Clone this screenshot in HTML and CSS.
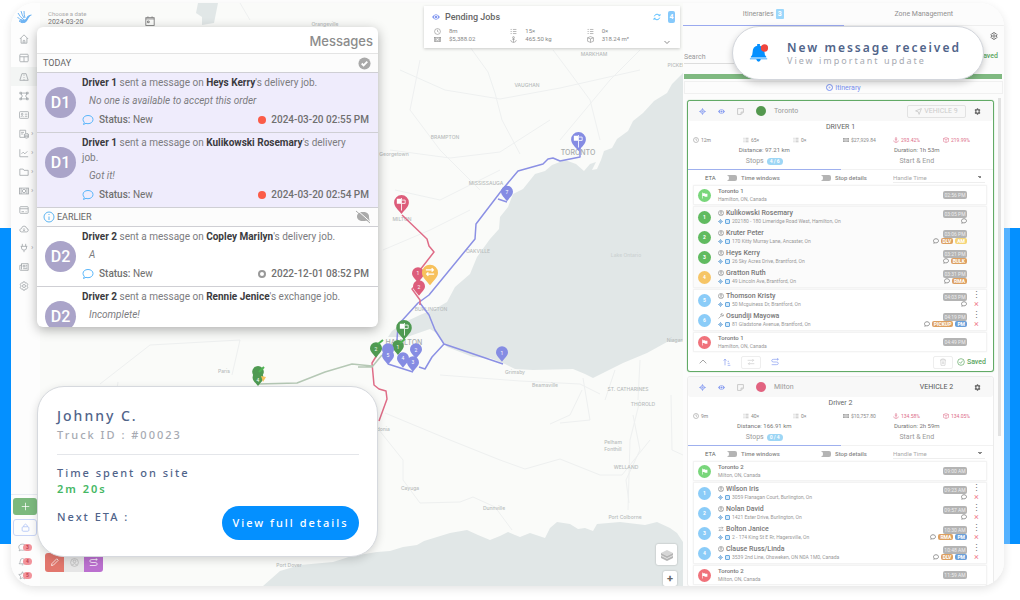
FILE: index.html
```html
<!DOCTYPE html>
<html lang="en">
<head>
<meta charset="utf-8">
<title>Route planner</title>
<link rel="stylesheet" href="styles.css">
</head>
<body>
<svg class="sprite" aria-hidden="true">
  <symbol id="home" viewBox="0 0 12 12"><path d="M1 6 6 1l5 5M2.500 5v6h7V5M5 11V8q1-1.500 2 0v3"/></symbol>
  <symbol id="table" viewBox="0 0 12 12"><rect x="1" y="1.500" width="10" height="9" rx="1"/><path d="M1 4.500h10M6 4.500v6"/></symbol>
  <symbol id="road" viewBox="0 0 12 12"><path d="M3.500 2h5L11 10H1zM6 3v1.500M6 6v1M6 8.500V10"/></symbol>
  <symbol id="zone" viewBox="0 0 12 12"><path d="M2 2.500h8L8 6l2 3.500H2L4 6zM1 1.500h2v2H1zM9 1.500h2v2H9zM1 8.500h2v2H1zM9 8.500h2v2H9z"/></symbol>
  <symbol id="idcard" viewBox="0 0 12 12"><rect x=".5" y="2" width="11" height="8" rx="1"/><circle cx="3.800" cy="5" r="1"/><path d="M2 8q2-2 3.500 0M7 5h3M7 7.500h3"/></symbol>
  <symbol id="orders" viewBox="0 0 12 12"><path d="M7 10H1V1.500h7V5M2.500 4H6M2.500 6H5"/><ellipse cx="9" cy="6.500" rx="2.500" ry="1"/><path d="M6.500 6.500V10q2.500 2 5 0V6.500M6.500 8.500q2.500 1.500 5 0"/></symbol>
  <symbol id="chart" viewBox="0 0 12 12"><path d="M1 1.500v9h10M3 7l2-2 2 2 3-3"/></symbol>
  <symbol id="folder" viewBox="0 0 12 12"><path d="M1 2.500h4l1 1.500h5v6H1z"/></symbol>
  <symbol id="cash" viewBox="0 0 12 12"><rect x=".5" y="2.500" width="11" height="7"/><circle cx="6" cy="6" r="2"/><path d="M2.500 2.500v7M9.500 2.500v7"/></symbol>
  <symbol id="card" viewBox="0 0 12 12"><rect x="1" y="2" width="10" height="8" rx="1"/><path d="M1 4.500h10M3 8h3M8 8h1"/></symbol>
  <symbol id="cloud" viewBox="0 0 12 12"><path d="M3 9.500q-2.500-.5-2-2.500Q1.500 5.500 3 5.500 3.500 2.500 6 2.500t3 2.500q2.500.5 2 3-.5 1.500-2 1.500zM6 5v3M4.800 7 6 8.200 7.200 7"/></symbol>
  <symbol id="plug" viewBox="0 0 12 12"><path d="M4 1v3M8 1v3M2 4h8M3 4v2q0 2.500 3 2.500T9 6V4M6 8.500V11"/></symbol>
  <symbol id="news" viewBox="0 0 12 12"><path d="M3 2h8v8H2q-1 0-1-1V4h2zM3 2v7M5 4h2v2H5zM8 4h2M8 6h2M5 8h5"/></symbol>
  <symbol id="gear" viewBox="0 0 12 12"><path d="M5 1h2l.5 1.500 1.500-.3L10.500 4l-1 2 1 2L9 9.800l-1.500-.3L7 11H5l-.5-1.500-1.500.3L1.500 8l1-2-1-2L3 2.200l1.500.3z"/><circle cx="6" cy="6" r="1.800"/></symbol>
  <symbol id="cogwheel" viewBox="0 0 12 12"><path fill="currentColor" stroke="none" fill-rule="evenodd" d="M5 .5h2l.5 1.700 1.700-.4L11 3.500 9.800 5v2L11 8.500l-1.800 1.700-1.700-.4L7 11.500H5l-.5-1.700-1.700.4L1 8.500 2.200 7V5L1 3.500l1.800-1.700 1.700.4zM6 4a2 2 0 1 0 0 4 2 2 0 0 0 0-4z"/></symbol>
  <symbol id="plus" viewBox="0 0 12 12"><path d="M6 1v10M1 6h10"/></symbol>
  <symbol id="lock" viewBox="0 0 12 12"><rect x="1.500" y="5" width="9" height="6" rx="1.500"/><path d="M3.500 5V3.500q2.500-4 5 0V5"/></symbol>
  <symbol id="bubble" viewBox="0 0 12 12"><path d="M6 1.500c3 0 5 1.700 5 4s-2 4.200-5 4.200q-1 0-2-.4L1.500 10.500l.8-2.200Q1 7 1 5.500c0-2.300 2-4 5-4z"/></symbol>
  <symbol id="bell" viewBox="0 0 12 12"><path d="M1.500 9Q3 7.500 3 5.500 3 2 6 2t3 3.500Q9 7.500 10.500 9zM5 10.500h2"/></symbol>
  <symbol id="star" viewBox="0 0 12 12"><path d="m6 1 1.500 3.200 3.500.5-2.500 2.400.6 3.400L6 9l-3.100 1.500.6-3.400L1 4.700l3.500-.5z"/></symbol>
  <symbol id="clock" viewBox="0 0 12 12"><circle cx="6" cy="6" r="5"/><path d="M6 3v3l2 1"/></symbol>
  <symbol id="list" viewBox="0 0 12 12"><path d="M1 2.500h2M5 2.500h6M1 6h2M5 6h6M1 9.500h2M5 9.500h6"/></symbol>
  <symbol id="weight" viewBox="0 0 12 12"><circle cx="6" cy="2.500" r="1.500"/><path d="M6 4v7M3.500 5.500h5M1 7q1 4 5 4t5-4"/></symbol>
  <symbol id="box" viewBox="0 0 12 12"><path d="m6 1 5 2v6l-5 2-5-2V3zM1 3l5 2 5-2M6 5v6"/></symbol>
  <symbol id="eye" viewBox="0 0 12 12"><path fill="currentColor" stroke="none" fill-rule="evenodd" d="M0 6Q6-2 12 6 6 14 0 6zM6 3a3 3 0 1 0 0 6 3 3 0 0 0 0-6z"/><circle fill="currentColor" stroke="none" cx="6" cy="6" r="1.800"/></symbol>
  <symbol id="target" viewBox="0 0 12 12"><circle cx="6" cy="6" r="3.200"/><circle cx="6" cy="6" r="1"/><path d="M6 .5v2.300M6 9.200v2.300M.5 6h2.300M9.200 6h2.300"/></symbol>
  <symbol id="note" viewBox="0 0 12 12"><path d="M1 1h10v6l-4 4H1zM11 7H7v4"/></symbol>
  <symbol id="person" viewBox="0 0 12 12"><circle cx="6" cy="6" r="5.200"/><circle cx="6" cy="4.500" r="1.800"/><path d="M2.500 9.500Q6 5.500 9.500 9.500"/></symbol>
  <symbol id="wrench" viewBox="0 0 12 12"><path d="m1 11 5.500-5.500M8.500 1Q5 1 5.500 4.500 7 8 11 5.500L11 3.500 9 5 7.500 3.500z"/></symbol>
  <symbol id="swap" viewBox="0 0 12 12"><path d="M1 3.500h9M8 1.500l2 2-2 2M11 8.500H2M4 6.500l-2 2 2 2"/></symbol>
  <symbol id="refresh" viewBox="0 0 12 12"><path d="M2 5Q3 1.800 6 1.800q2.500 0 4 2.200M10.500 1.500V4H8M10 7Q9 10.200 6 10.200 3.500 10.200 2 8M1.500 10.500V8H4"/></symbol>
  <symbol id="down" viewBox="0 0 12 12"><path d="m1 4 5 5 5-5"/></symbol>
  <symbol id="up" viewBox="0 0 12 12"><path d="m1 8 5-5 5 5"/></symbol>
  <symbol id="sort" viewBox="0 0 12 12"><path d="M3 11V2M1 4l2-2.500L5 4M7 5h2M7 8h3M7 11h4"/></symbol>
  <symbol id="route" viewBox="0 0 12 12"><path d="M11 2H4Q1 2 1 4t3 2h4q3 0 3 2t-3 2H1M9 .5 11 2 9 3.500"/></symbol>
  <symbol id="trash" viewBox="0 0 12 12"><path d="M1.500 3h9M4 3V1.500h4V3M2.500 3l.5 8h6l.5-8M5 5v4M7 5v4"/></symbol>
  <symbol id="check" viewBox="0 0 12 12"><circle cx="6" cy="6" r="5"/><path d="m3.500 6 2 2 3-4"/></symbol>
  <symbol id="send" viewBox="0 0 12 12"><path d="M11 1 7 11 5.500 6.500 1 5z"/></symbol>
  <symbol id="flag" viewBox="0 0 12 12"><path fill="currentColor" d="M2 1h1v10H2zM3 2h4v1h4v5H6V7H3z"/></symbol>
  <symbol id="depotflag" viewBox="0 0 12 12"><path fill="currentColor" d="M1 1h5v6H1zM6 0h1v15H6z"/><path stroke="currentColor" d="M7 2.500h4v4H7"/></symbol>
  <symbol id="pencil" viewBox="0 0 12 12"><path d="m2 10 .5-2.500L9 1l2 2-6.500 6.500z"/></symbol>
  <symbol id="pin" viewBox="0 0 14 18"><path d="M7 0a7 7 0 0 1 7 7c0 4-4 7-7 11C4 14 0 11 0 7a7 7 0 0 1 7-7z"/></symbol>
</svg>

<div class="stage">
  <main class="app">
    <nav class="rail" aria-label="Main">
      <svg class="logo" viewBox="0 0 15 15"><path d="M1 3q2 4 5 6M4 1q1 4 3 7M7 1q0 4 1 7M.5 7q2 3 5 3M14.500 5q-3 0-4 2.500T8 12q-3 2-6-1 4 0 5-2"/><path class="body" d="M14 5q-4 0-5 4-3 1-6 2 4 4 7 0 2-4 4-6z"/></svg>
      <a href="#" aria-label="Home"><svg><use href="#home"/></svg></a>
      <a href="#" aria-label="Boards"><svg><use href="#table"/></svg></a>
      <a href="#" aria-label="Routes" class="here"><svg><use href="#road"/></svg></a>
      <a href="#" aria-label="Zones"><svg><use href="#zone"/></svg></a>
      <a href="#" aria-label="Contacts"><svg><use href="#idcard"/></svg></a>
      <a href="#" aria-label="Orders" class="more"><svg><use href="#orders"/></svg></a>
      <a href="#" aria-label="Reports" class="more"><svg><use href="#chart"/></svg></a>
      <a href="#" aria-label="Files" class="more"><svg><use href="#folder"/></svg></a>
      <a href="#" aria-label="Payments" class="more"><svg><use href="#cash"/></svg></a>
      <a href="#" aria-label="Billing"><svg><use href="#card"/></svg></a>
      <a href="#" aria-label="Import"><svg><use href="#cloud"/></svg></a>
      <a href="#" aria-label="Integrations" class="more"><svg><use href="#plug"/></svg></a>
      <a href="#" aria-label="News"><svg><use href="#news"/></svg></a>
      <a href="#" aria-label="Settings"><svg><use href="#gear"/></svg></a>
      <div class="rail-foot">
        <button class="add" aria-label="Add"><svg><use href="#plus"/></svg></button>
        <button class="lock" aria-label="Lock"><svg><use href="#lock"/></svg></button>
        <a href="#" aria-label="Messages" class="alert"><svg><use href="#bubble"/></svg><b>3</b></a>
        <a href="#" aria-label="Alerts" class="alert"><svg><use href="#bell"/></svg><b>4</b></a>
        <a href="#" aria-label="Favourites" class="alert"><svg><use href="#star"/></svg><b>5</b></a>
      </div>
    </nav>

    <section class="map" aria-label="Map">
      <svg class="canvas" viewBox="40 3 643 583" preserveAspectRatio="xMidYMid slice">
        <g class="water">
          <path d="M683 73 672 84 667 93 654 101 643 113 633 121 628 131 617 139 612 148 604 151 601 160 597 169 592 170 596 162 590 164 584 171 576 164 565 160 552 165 545 171 535 174 523 189 513 194 508 207 500 217 499 229 490 239 477 257 470 274 455 287 447 302 435 309 420 315 403 323 392 331 388 337 407 337 430 329 438 334 447 347 473 357 490 358 503 363 515 369 533 370 573 369 585 374 593 378 605 372 623 363 647 353 667 342 683 341z"/>
          <path d="M263 586 280 571 300 565 333 562 352 556 377 552 390 551 403 547 417 545 424 541 437 537 450 533 467 530 478 535 490 540 500 536 508 532 515 535 520 537 530 533 545 538 550 528 557 522 570 524 578 529 585 528 593 531 597 524 620 522 645 525 657 522 670 528 677 533 683 542V586z"/>
          <path d="M198 3l-2 10 6 4 0 8 12-2 4-20z"/>
        </g>
        <g class="roads">
          <path d="M470 47 488 72 495 93 502 120 520 154M553 50 571 74 590 100 600 140M400 70 445 90 500 99 560 88 640 70M390 150 450 158 500 152 550 120M420 60 410 110 440 150 480 190M395 190 440 200 500 170M640 50 610 80 560 140M383 250 430 230 470 210M250 20 240 3M100 384 150 345 240 340 232 375M105 470 118 382M379 430 403 460 403 480 420 503 460 502 473 497 495 507 512 530M385 413 450 440 500 460 525 469 560 459 600 475 622 475 650 440M640 400 630 440 628 510M633 415 640 450 626 480 629 503M671 395 672 450 683 455M440 375 520 381 580 384 600 394M583 378 590 420 560 423M582 390 570 415 550 424M640 360 638 400M615 370 605 400"/>
        </g>
        <g class="places">
          <text x="527" y="87">VAUGHAN</text><text x="594" y="56">MARKHAM</text><text x="681" y="67">PICKERING</text>
          <text x="445" y="139">BRAMPTON</text><text x="486" y="185">MISSISSAUGA</text><text x="478" y="253">OAKVILLE</text>
          <text x="402" y="221">MILTON</text><text x="431" y="311">BURLINGTON</text><text class="city" x="404" y="345">HAMILTON</text>
          <text class="city" x="578" y="155">TORONTO</text><text x="628" y="391">ST. CATHARINES</text><text x="643" y="406">THOROLD</text>
          <text x="626" y="469">WELLAND</text><text x="613" y="444">Pelham</text><text x="613" y="451">Fonthill</text>
          <text x="625" y="519">Port Colborne</text><text x="494" y="510">Dunnville</text><text x="410" y="490">Cayuga</text>
          <text x="545" y="387">Beamsville</text><text x="515" y="374">Grimsby</text><text x="676" y="342">Niagara</text>
          <text class="faint" x="626" y="257">Lake Ontario</text><text x="394" y="156">Georgetown</text><text x="224" y="373">Paris</text>
          <text x="378" y="431">Caledonia</text><text x="289" y="567">Port Dover</text><text x="325" y="26">Orangeville</text>
        </g>
        <g class="route purple-line"><path d="M580 148V157L570 159 560 161 553 158 548 159 543 164 518 171 502 190 476 224 475 239 429 295 418 303 398 325 397 340M498 199 507 202M420 303 429 315 435 330 444 344 503 364M444 344 432 357 425 369 419 367M388 364 413 372"/></g>
        <g class="route red-line"><path d="M402 215 427 239 429 246 434 252 420 270 419 282 412 289 420 300V305M377 355 372 363 374 385 379 389 386 391 387 399 379 421"/></g>
        <g class="route green-line"><path d="M258 384 297 383 325 372 352 364 372 366M358 367 372 367 382 355"/></g>
        <g class="pins">
          <use href="#pin" class="green" x="252" y="366" width="12" height="15"/><use href="#pin" class="green" x="252" y="372" width="12" height="14"/>
          <path class="gold" d="m261 376 5 1-3 5z"/><path class="tick" d="m259 372 5-5"/><text x="258" y="382">4</text>
          <use href="#pin" class="purple" x="571" y="132" width="15" height="19"/><use href="#depotflag" x="573" y="135" width="10" height="10"/>
          <use href="#pin" class="red" x="394" y="195" width="15" height="19"/><use href="#depotflag" x="396" y="198" width="10" height="10"/>
          <use href="#pin" class="purple" x="501" y="185" width="12" height="17"/><text x="507" y="194">7</text>
          <use href="#pin" class="red" x="412" y="267" width="12" height="16"/><text x="418" y="275">1</text>
          <use href="#pin" class="gold" x="422" y="264" width="16" height="22"/><use href="#swap" class="white" x="425" y="267" width="10" height="10"/>
          <use href="#pin" class="red" x="413" y="280" width="12" height="16"/><text x="419" y="289">2</text>
          <use href="#pin" class="green" x="396" y="320" width="16" height="20"/><use href="#depotflag" x="399" y="323" width="10" height="10"/>
          <use href="#pin" class="green" x="370" y="342" width="12" height="16"/><text x="376" y="351">2</text><path class="tick" d="m378 344 5-4"/>
          <use href="#pin" class="green" x="392" y="340" width="12" height="15"/><text x="398" y="349">1</text><path class="tick" d="m400 343 5-4"/>
          <use href="#pin" class="purple" x="382" y="343" width="12" height="16"/><use href="#pin" class="purple" x="382" y="349" width="12" height="16"/><text x="388" y="357">5</text>
          <use href="#pin" class="purple" x="410" y="343" width="12" height="16"/><text x="416" y="352">2</text>
          <use href="#pin" class="purple" x="397" y="352" width="12" height="16"/><text x="403" y="360">4</text>
          <use href="#pin" class="purple" x="407" y="356" width="12" height="16"/><text x="413" y="364">3</text>
          <use href="#pin" class="purple" x="496" y="346" width="12" height="16"/><text x="502" y="355">1</text>
        </g>
      </svg>
      <label class="date"><span>Choose a date</span><input type="text" value="2024-03-20"><svg viewBox="0 0 12 12"><rect x="1" y="2" width="10" height="9.500"/><path d="M1 3.500h10M3.500.5V2M8.500.5V2M3 6h2v2H3z"/></svg></label>
      <section class="pending">
        <header><svg class="ico blue"><use href="#eye"/></svg><h2>Pending Jobs</h2><button aria-label="Refresh"><svg class="ico sky"><use href="#refresh"/></svg></button><b>4</b></header>
        <div class="pending-grid">
          <span><svg class="ico"><use href="#clock"/></svg>8m</span><span><svg class="ico"><use href="#list"/></svg>15×</span><span><svg class="ico"><use href="#list"/></svg>0×</span>
          <span><svg class="ico"><use href="#cash"/></svg>$5,388.02</span><span><svg class="ico"><use href="#weight"/></svg>465.50 kg</span><span><svg class="ico"><use href="#box"/></svg>318.24 m²</span>
        </div>
        <button class="expand" aria-label="Expand"><svg class="ico"><use href="#down"/></svg></button>
      </section>
      <div class="tools"><button class="t-red" aria-label="Draw"><svg><use href="#pencil"/></svg></button><button class="t-grey" aria-label="Clear"><svg><use href="#person"/></svg></button><button class="t-violet" aria-label="Route"><svg><use href="#route"/></svg></button></div>
      <div class="zoomers"><button class="layers" aria-label="Layers"><svg viewBox="0 0 16 16"><path d="m8 3 6 3-6 3-6-3z"/><path class="dark" d="m2 6 6 3 6-3v5l-6 3-6-3z"/><path class="edge" d="m2 8.500 6 3 6-3"/></svg></button><button class="zin" aria-label="Zoom in">+</button></div>
    </section>

    <aside class="panel">
      <div class="tabs"><button class="on">Itineraries <b>3</b></button><button>Zone Management</button></div>
      <div class="find"><button aria-label="Panel settings"><svg class="ico"><use href="#gear"/></svg></button>
        <div><input type="search" placeholder="Search" aria-label="Search"><span class="saved"><svg class="ico"><use href="#check"/></svg>Saved</span></div></div>
      <div class="bar"></div>
      <button class="new"><svg class="ico"><use href="#plus"/></svg>Itinerary</button>
      <div class="scroll">
        <div class="cards">
          <article class="card active">
            <header><svg class="ico blue"><use href="#target"/></svg><svg class="ico blue"><use href="#eye"/></svg><svg class="ico pale"><use href="#note"/></svg><i class="dot dk-green"></i><h3>Toronto</h3><button class="vehicle off"><svg class="ico"><use href="#send"/></svg>VEHICLE 9</button><button class="cog" aria-label="Settings"><svg class="ico"><use href="#cogwheel"/></svg></button></header>
            <p class="driver">DRIVER 1</p>
            <div class="stats"><span><svg class="ico"><use href="#clock"/></svg>12m</span><span><svg class="ico"><use href="#list"/></svg>65×</span><span><svg class="ico"><use href="#list"/></svg>0×</span><span><svg class="ico"><use href="#cash"/></svg>$27,929.84</span><span class="over"><svg class="ico"><use href="#weight"/></svg>293.42%</span><span class="over"><svg class="ico"><use href="#box"/></svg>219.99%</span></div>
            <div class="totals"><span>Distance: 97.21 km</span><span>Duration: 1h 53m</span></div>
            <div class="subtabs"><button class="on">Stops <b>4 / 6</b></button><button>Start &amp; End</button></div>
            <div class="opts"><span>ETA</span><label><input type="checkbox">Time windows</label><label><input type="checkbox">Stop details</label><select aria-label="Handle time"><option>Handle Time</option></select></div>
            <ul class="group"><li class="depot"><i class="num lime"><svg><use href="#flag"/></svg></i><div><h4>Toronto 1</h4><p>Hamilton, ON, Canada</p></div><div class="meta"><time>02:56 PM</time></div></li></ul>
            <ul class="group done">
              <li><i class="num green">1</i><div><h4><svg class="ico"><use href="#person"/></svg>Kulikowski Rosemary</h4><p><svg class="ico"><use href="#target"/></svg><i class="sq"></i>202180 - 180 Limeridge Road West, Hamilton, On</p></div><div class="meta"><time>03:05 PM</time><span><svg class="ico"><use href="#bubble"/></svg></span></div></li>
              <li><i class="num green">2</i><div><h4><svg class="ico"><use href="#person"/></svg>Kruter Peter</h4><p><svg class="ico"><use href="#target"/></svg><i class="sq"></i>170 Kitty Murray Lane, Ancaster, On</p></div><div class="meta"><time>03:06 PM</time><span><svg class="ico"><use href="#bubble"/></svg><b class="or">DLV</b><b class="ye">AM</b></span></div></li>
              <li><i class="num green">3</i><div><h4><svg class="ico"><use href="#person"/></svg>Heys Kerry</h4><p><svg class="ico"><use href="#target"/></svg><i class="sq"></i>26 Sky Acres Drive, Brantford, On</p></div><div class="meta"><time>03:21 PM</time><span><svg class="ico"><use href="#bubble"/></svg><b class="or">BULK</b></span></div></li>
              <li><i class="num gold">4</i><div><h4><svg class="ico"><use href="#person"/></svg>Gratton Ruth</h4><p><svg class="ico"><use href="#target"/></svg><i class="sq"></i>49 Lincoln Ave, Brantford, On</p></div><div class="meta"><time>03:31 PM</time><span><svg class="ico"><use href="#bubble"/></svg><b class="or">RMA</b></span></div></li>
            </ul>
            <ul class="group">
              <li><i class="num sky">5</i><div><h4><svg class="ico"><use href="#person"/></svg>Thomson Kristy</h4><p><svg class="ico"><use href="#target"/></svg><i class="sq"></i>50 Mcguiness Dr, Brantford, On</p></div><div class="meta"><time>04:03 PM</time><span><svg class="ico"><use href="#bubble"/></svg></span></div><div class="acts"><button aria-label="More">⋮</button><button aria-label="Remove">×</button></div></li>
              <li><i class="num sky">6</i><div><h4><svg class="ico"><use href="#wrench"/></svg>Osundiji Mayowa</h4><p><svg class="ico"><use href="#target"/></svg><i class="sq"></i>81 Gladstone Avenue, Brantford, On</p></div><div class="meta"><time>04:19 PM</time><span><svg class="ico"><use href="#bubble"/></svg><b class="or">PICKUP</b><b class="bl">PM</b></span></div><div class="acts"><button aria-label="More">⋮</button><button aria-label="Remove">×</button></div></li>
            </ul>
            <ul class="group"><li class="depot"><i class="num coral"><svg><use href="#flag"/></svg></i><div><h4>Toronto 1</h4><p>Hamilton, ON, Canada</p></div><div class="meta"><time>04:49 PM</time></div></li></ul>
            <footer><button aria-label="Collapse"><svg class="ico"><use href="#up"/></svg></button><button class="blue" aria-label="Sort"><svg class="ico"><use href="#sort"/></svg></button><button class="framed" aria-label="Reverse"><svg class="ico"><use href="#swap"/></svg></button><button class="blue" aria-label="Optimise"><svg class="ico"><use href="#route"/></svg></button><button class="framed last" aria-label="Delete"><svg class="ico"><use href="#trash"/></svg></button><span class="saved"><svg class="ico"><use href="#check"/></svg>Saved</span></footer>
          </article>

          <article class="card">
            <header><svg class="ico blue"><use href="#target"/></svg><svg class="ico blue"><use href="#eye"/></svg><svg class="ico pale"><use href="#note"/></svg><i class="dot rose"></i><h3>Milton</h3><button class="vehicle">VEHICLE 2</button><button class="cog" aria-label="Settings"><svg class="ico"><use href="#cogwheel"/></svg></button></header>
            <p class="driver">Driver 2</p>
            <div class="stats"><span><svg class="ico"><use href="#clock"/></svg>9m</span><span><svg class="ico"><use href="#list"/></svg>40×</span><span><svg class="ico"><use href="#list"/></svg>0×</span><span><svg class="ico"><use href="#cash"/></svg>$10,757.80</span><span class="over"><svg class="ico"><use href="#weight"/></svg>134.58%</span><span class="over"><svg class="ico"><use href="#box"/></svg>134.05%</span></div>
            <div class="totals"><span>Distance: 166.91 km</span><span>Duration: 2h 59m</span></div>
            <div class="subtabs"><button class="on">Stops <b>0 / 4</b></button><button>Start &amp; End</button></div>
            <div class="opts"><span>ETA</span><label><input type="checkbox">Time windows</label><label><input type="checkbox">Stop details</label><select aria-label="Handle time"><option>Handle Time</option></select></div>
            <ul class="group"><li class="depot"><i class="num lime"><svg><use href="#flag"/></svg></i><div><h4>Toronto 2</h4><p>Milton, ON, Canada</p></div><div class="meta"><time>09:00 AM</time></div></li></ul>
            <ul class="group">
              <li><i class="num sky">1</i><div><h4><svg class="ico"><use href="#person"/></svg>Wilson Iris</h4><p><svg class="ico"><use href="#target"/></svg><i class="sq"></i>3059 Flanagan Court, Burlington, On</p></div><div class="meta"><time>09:23 AM</time><span><svg class="ico"><use href="#bubble"/></svg></span></div><div class="acts"><button aria-label="More">⋮</button><button aria-label="Remove">×</button></div></li>
              <li><i class="num sky">2</i><div><h4><svg class="ico"><use href="#person"/></svg>Nolan David</h4><p><svg class="ico"><use href="#target"/></svg><i class="sq"></i>1421 Ester Drive, Burlington, On</p></div><div class="meta"><time>09:57 AM</time><span><svg class="ico"><use href="#bubble"/></svg></span></div><div class="acts"><button aria-label="More">⋮</button><button aria-label="Remove">×</button></div></li>
              <li><i class="num sky">3</i><div><h4><svg class="ico"><use href="#swap"/></svg>Bolton Janice</h4><p><svg class="ico"><use href="#target"/></svg><i class="sq"></i>2 - 174 King St E Rr, Hagersville, On</p></div><div class="meta"><time>10:30 AM</time><span><svg class="ico"><use href="#bubble"/></svg><b class="or">RMA</b><b class="bl">PM</b></span></div><div class="acts"><button aria-label="More">⋮</button><button aria-label="Remove">×</button></div></li>
              <li><i class="num sky">4</i><div><h4><svg class="ico"><use href="#person"/></svg>Clause Russ/Linda</h4><p><svg class="ico"><use href="#target"/></svg><i class="sq"></i>3539 2nd Line, Ohsweken, ON N0A 1M0, Canada</p></div><div class="meta"><time>10:48 AM</time><span><svg class="ico"><use href="#bubble"/></svg><b class="or">DLV</b><b class="bl">PM</b></span></div><div class="acts"><button aria-label="More">⋮</button><button aria-label="Remove">×</button></div></li>
            </ul>
            <ul class="group"><li class="depot"><i class="num coral"><svg><use href="#flag"/></svg></i><div><h4>Toronto 2</h4><p>Milton, ON, Canada</p></div><div class="meta"><time>11:59 AM</time></div></li></ul>
          </article>
        </div>
        <div class="thumb"></div>
      </div>
    </aside>
  </main>

  <section class="messages">
    <h1>Messages</h1>
    <h2 class="sec"><span>TODAY</span><svg class="tickdot" viewBox="0 0 14 14"><circle cx="7" cy="7" r="6.500"/><path d="m4 7 2 2 4-4"/></svg></h2>
    <article class="msg unread"><i class="face">D1</i><div><p><b>Driver 1</b> sent a message on <b>Heys Kerry</b>'s delivery job.</p><q>No one is available to accept this order</q><footer><svg class="talk"><use href="#bubble"/></svg><span><em>Status:</em> New</span><i class="mark"></i><time>2024-03-20 02:55 PM</time></footer></div></article>
    <article class="msg unread"><i class="face">D1</i><div><p><b>Driver 1</b> sent a message on <b>Kulikowski Rosemary</b>'s delivery job.</p><q>Got it!</q><footer><svg class="talk"><use href="#bubble"/></svg><span><em>Status:</em> New</span><i class="mark"></i><time>2024-03-20 02:54 PM</time></footer></div></article>
    <h2 class="sec"><svg class="info" viewBox="0 0 12 12"><circle cx="6" cy="6" r="5"/><path d="M6 5.500V9M6 3v1"/></svg><span>EARLIER</span><svg class="mute" viewBox="0 0 16 14"><path class="fill" d="M8 2c4 0 6 2 6 4.500 0 2 .5 3.500 1 5-2 0-3-1-3.500-1q-1.500.5-3.500.5c-4 0-6-2-6-4.500S4 2 8 2z"/><path class="gap" d="m2 0 14 12.500"/><path class="slash" d="m1 1 14 12"/></svg></h2>
    <article class="msg"><i class="face">D2</i><div><p><b>Driver 2</b> sent a message on <b>Copley Marilyn</b>'s delivery job.</p><q>A</q><footer><svg class="talk"><use href="#bubble"/></svg><span><em>Status:</em> New</span><i class="mark read"></i><time>2022-12-01 08:52 PM</time></footer></div></article>
    <article class="msg"><i class="face">D2</i><div><p><b>Driver 2</b> sent a message on <b>Rennie Jenice</b>'s exchange job.</p><q>Incomplete!</q></div></article>
  </section>

  <section class="trip">
    <h2>Johnny C.</h2>
    <p class="truck">Truck ID : #00023</p>
    <p class="label">Time spent on site</p>
    <p class="value">2m 20s</p>
    <div class="trip-foot"><p>Next ETA :</p><button>View full details</button></div>
  </section>

  <section class="toast" role="status">
    <svg viewBox="0 0 22 22"><path d="M9 1h3v2q5 1 5 7 0 4 2 5v1H2v-1q2-1 2-5 0-6 5-7zM1 17h19v1H13q-.5 2.500-2.500 2.500T8 18H1z"/><circle cx="17" cy="5.500" r="4"/></svg>
    <div><h2>New message received</h2><p>View important update</p></div>
  </section>
</div>
</body>
</html>
```
FILE: styles.css
```css
*, ::before, ::after { box-sizing: border-box; }
* { margin: 0; padding: 0; }
body { background: #fff; font-family: Roboto, "Liberation Sans", sans-serif; color: #666; }
button, input, select { font: inherit; color: inherit; border: 0; background: none; }
button { display: inline-flex; align-items: center; justify-content: center; }
a { color: inherit; text-decoration: none; }
ul { list-style: none; }
i { font-style: normal; }
.sprite { position: absolute; width: 0; height: 0; }
symbol { overflow: visible; }
svg { fill: none; stroke: currentColor; }
.ico { width: 6px; height: 6px; flex: none; stroke-width: 1.5; }
.blue { color: #8298f0; }
.sky { color: #5fc0ff; }
.pale { color: #c4c4c4; }

/* Page frame with the blue side bands */
.stage { position: relative; display: flex; height: 100vh; padding: 3px 16px 14px 11px; overflow: hidden; }
.stage::before, .stage::after { content: ""; position: absolute; top: 228px; height: 316px; background: #0490ff; }
.stage::before { left: 0; width: 11px; }
.stage::after { right: 0; width: 16px; border-left: 6px solid #55b2ff; }
.app { flex: 1; display: grid; grid-template-columns: 29px 1fr 321px; border-radius: 24px; overflow: hidden; background: #fff; box-shadow: 0 3px 10px #0000001c; }

/* Icon rail */
.rail { display: flex; flex-direction: column; align-items: stretch; padding-top: 7px; color: #a4a8ac; background: #fdfdfd; }
.logo { width: 15px; height: 15px; margin: 0 auto 4px 6px; color: #6fb4f3; stroke-width: 1; }
.logo .body { fill: #6fb4f3; stroke: none; }
.rail > a { display: flex; align-items: center; justify-content: center; height: 19px; gap: 2px; padding-right: 3px; }
.rail > a svg { width: 10px; height: 10px; }
.rail .here { background: #f3f5f4; }
.rail .more::after { content: "›"; width: 3px; font-size: 8px; margin-right: -5px; }
.rail-foot { margin-top: auto; display: flex; flex-direction: column; gap: 4px; padding: 3px 3px 6px 2px; border-top: 1px solid #e8ecf2; }
.rail-foot button { height: 17px; border-radius: 3px; }
.rail-foot svg { width: 9px; height: 9px; }
.add { background: #7cb97e; color: #fff; }
.rail-foot .add { background: #7cb97e; }
.rail-foot .lock { border: 1px solid #c9d5f6; color: #a9bff5; margin-bottom: 2px; }
.alert { display: flex; align-items: center; justify-content: center; height: 10px; }
.alert b { width: 9px; height: 7px; margin-left: -4px; border-radius: 4px; background: #f2939b; color: #c24451; font-size: 5px; line-height: 7px; text-align: center; }

/* Map */
.map { position: relative; overflow: hidden; background: #fafbf9; }
.canvas { position: absolute; inset: 0; width: 100%; height: 100%; stroke: none; }
.water { fill: #e1e7e7; }
.roads { fill: none; stroke: #eef0f0; stroke-width: 1; }
.places text { font: 500 5px Inter, sans-serif; fill: #b8bcbc; text-anchor: middle; }
.places .city { font-size: 7px; fill: #a8acac; }
.places .faint { fill: #ccd2d2; }
.route { fill: none; stroke-width: 1.5; stroke-linejoin: round; }
.purple-line { stroke: #8b90e4; }
.red-line { stroke: #df6c87; }
.green-line { stroke: #b5c8b5; }
.pins .green { fill: #4f9a52; }
.pins .purple { fill: #858ce3; }
.pins .red { fill: #dd5d7b; }
.pins .gold { fill: #f7c15c; }
.pins { color: #fff; }
.pins .white { stroke: #fff; stroke-width: 1.5; }
.pins .tick { stroke: #4fb353; stroke-width: 2; }
.pins text { font: 5px Roboto, sans-serif; fill: #fff; text-anchor: middle; }
.date { position: absolute; left: 8px; top: 7px; width: 107px; display: grid; grid-template-columns: 1fr 10px; font-size: 7px; line-height: 8px; color: #777; }
.date span { font-size: 6px; color: #aaa; }
.date input { grid-row: 2; width: 60px; }
.date svg { grid-area: 1 / 2 / 3 / 3; align-self: end; width: 10px; height: 10px; }

.pending { position: absolute; right: 3px; top: 3px; width: 256px; height: 42px; padding: 5px 5px 3px 8px; background: #fff; box-shadow: 0 1px 3px #0003; }
.pending header { display: flex; align-items: center; gap: 5px; height: 12px; }
.pending header .ico { width: 8px; height: 8px; }
.pending h2 { flex: 1; font-size: 9px; font-weight: 500; }
.pending b { width: 7px; height: 12px; margin-left: 2px; border-radius: 2px; background: #86c9fb; color: #fff; font-size: 7px; line-height: 12px; text-align: center; }
.pending-grid { display: grid; grid-template-columns: repeat(3, 1fr); margin: 4px 12px 0 2px; font-size: 6px; line-height: 8px; color: #888; }
.pending-grid span { display: flex; align-items: center; gap: 8px; }
.pending-grid .ico { width: 7px; height: 7px; stroke-width: 1; }
.expand { position: absolute; right: 10px; bottom: 3px; }

.tools { position: absolute; left: 5px; bottom: 14px; display: flex; border-radius: 3px; overflow: hidden; }
.tools button { width: 19px; height: 19px; color: #fff; }
.tools svg { width: 9px; height: 9px; }
.tools .t-red { background: #e2776d; }
.tools .t-grey { background: #e6e6e6; color: #bbb; width: 20px; }
.tools .t-violet { background: #bb70cf; }
.zoomers { position: absolute; right: 6px; bottom: 0; display: flex; flex-direction: column; align-items: flex-end; gap: 6px; }
.zoomers button { background: #fff; box-shadow: 0 0 2px #0004; border-radius: 2px; }
.layers { width: 21px; height: 21px; }
.layers svg { width: 16px; height: 16px; stroke: none; fill: #d6d6d6; }
.layers .dark { fill: #b4b4b4; }
.layers .edge { fill: none; stroke: #e4e4e4; }
.zin { width: 14px; height: 15px; font-size: 11px; font-weight: 700; }

/* Itinerary panel */
.panel { display: flex; flex-direction: column; min-width: 0; overflow: hidden; background: #fcfcfc; font-size: 7px; color: #777; }
.tabs { display: grid; grid-template-columns: 1fr 1fr; height: 23px; flex: none; }
.tabs button { border-bottom: 1px solid #eee; color: #909090; gap: 2px; }
.tabs .on { border-color: #9aa9ef; }
.tabs b { width: 8px; height: 10px; border-radius: 1px; background: #9bd7fb; color: #fff; line-height: 10px; }
.find { display: flex; flex-direction: column; align-items: flex-end; height: 48px; flex: none; padding: 6px 6px 0 1px; }
.find > button .ico { width: 8px; height: 8px; }
.find > div { display: flex; align-items: center; align-self: stretch; justify-content: space-between; margin-top: 7px; }
.find input { width: 200px; height: 17px; padding-top: 3px; border-bottom: 1px solid #ddd; }
.find input::placeholder { color: #999; }
.saved { display: inline-flex; align-items: center; gap: 2px; color: #5ba55e; font-weight: 500; }
.saved .ico { width: 8px; height: 8px; stroke-width: 1; }
.bar { height: 5px; flex: none; margin: 0 2px 2px 1px; background: #7fb981; }
.new { flex: none; height: 13px; margin: 0 1px; }
.panel .new { gap: 2px; border: 1px solid #f0f0f0; color: #7891f2; }
.new .ico { width: 7px; height: 7px; padding: 1px; border: 1px solid; border-radius: 50%; }
.scroll { flex: 1; min-height: 0; display: flex; gap: 4px; padding: 4px 3px 0 4px; overflow: hidden; }
.cards { flex: 1; min-width: 0; display: flex; flex-direction: column; gap: 4px; padding-top: 2px; }
.thumb { width: 3px; height: 338px; background: #e2e2e2; }

.card { flex: none; border: 1px solid #ececec; border-radius: 3px; background: #fff; }
.card.active { border-color: #62aa66; box-shadow: 0 0 1px #62aa66; }
.card header { display: flex; align-items: center; height: 20px; gap: 12px; padding: 0 12px 0 11px; background: #f8f8f8; border-radius: 3px; }
.card header .ico { width: 7px; height: 7px; }
.dot { width: 10px; height: 10px; border-radius: 50%; }
.dk-green { background: #54984f; }
.rose { background: #e26380; }
.card h3 { flex: 1; margin-left: -4px; font-size: 7px; font-weight: 400; color: #999; }
.vehicle { width: 59px; height: 13px; gap: 2px; margin-right: -4px; border-radius: 2px; }
.card .vehicle { color: #555; }
.card .vehicle.off { border: 1px solid #e2e2e2; color: #ccc; }
.card .cog { color: #666; }
.driver { height: 13px; line-height: 12px; text-align: center; color: #666; }
.stats { display: grid; grid-template-columns: repeat(6, 1fr); padding: 0 0 0 5px; height: 12px; font-size: 5px; color: #888; }
.stats span { display: flex; align-items: center; gap: 2px; }
.stats .ico { stroke-width: 1; }
.stats .over { color: #dc6c88; }
.totals { display: grid; grid-template-columns: 1fr 1fr; height: 7px; font-size: 6px; line-height: 7px; text-align: center; }
.subtabs { display: grid; grid-template-columns: 1fr 1fr; height: 17px; }
.subtabs button { gap: 3px; color: #999; border-bottom: 1px solid #f2f2f2; }
.subtabs .on { border-color: #9fb0ee; }
.subtabs b { width: 16px; height: 7px; border-radius: 4px; background: #9dd6f5; color: #fff; font-size: 5px; line-height: 7px; }
.opts { display: grid; grid-template-columns: 17px 94px 77px 92px; align-items: center; height: 15px; padding-left: 17px; font-size: 6px; font-weight: 500; color: #888; }
.opts > span { font-weight: 400; color: #666; }
.opts label { display: flex; align-items: center; gap: 4px; }
.opts input { appearance: none; position: relative; width: 15px; height: 6px; background: linear-gradient(90deg, #fff 5px, #b4b4b4 5px); border-radius: 2px; }
.opts input::before { content: ""; position: absolute; left: 0; top: 0; width: 7px; height: 6px; border-radius: 50%; background: #fff; }
.opts select { height: 10px; border-bottom: 1px solid #eee; font-weight: 400; color: #aaa; appearance: none; background: conic-gradient(from -45deg at 50% 100%, #888 90deg, transparent 0) right 3px center / 4px 2px no-repeat; }

.group { margin: 0 6px 1px 5px; border: 1px solid #f3f3f3; box-shadow: 0 0 2px #0000000d; }
.group li { display: grid; grid-template-columns: 20px 1fr auto 19px; align-items: center; height: 20px; padding-left: 4px; }
.group.done { background: #fbfbfb; }
.group .depot { height: 18px; }
.num { display: grid; place-items: center; width: 13px; height: 13px; border-radius: 50%; color: #fff; font-size: 5px; font-weight: 700; }
.num svg { width: 7px; height: 7px; stroke: none; }
.num.lime { background: #79d67b; }
.num.green { background: #61bb60; }
.num.gold { background: #f6c566; }
.num.sky { background: #8bccf8; }
.num.coral { background: #f0727b; }
.group h4 { display: flex; align-items: center; gap: 2px; font-size: 7px; line-height: 8px; font-weight: 500; color: #777; }
.group h4 .ico { stroke-width: 1; }
.group .depot h4 { font-size: 6px; }
.group p { display: flex; align-items: center; gap: 2px; font-size: 5px; line-height: 8px; color: #999; white-space: nowrap; }
.group p .ico { width: 5px; height: 5px; color: #6ba5d9; stroke-width: 2; }
.sq { width: 5px; height: 5px; border: 1px solid #69a9df; background: #d4e9fa; border-radius: 1px; }
.meta { display: flex; flex-direction: column; align-items: flex-end; }
.meta time { width: 24px; height: 8px; border-radius: 2px; background: #b4b4b4; color: #eee; font-size: 5px; line-height: 8px; text-align: center; }
.meta span { display: flex; align-items: center; gap: 2px; height: 7px; }
.meta b { padding: 0 2px; border-radius: 2px; color: #fff; font-size: 5px; line-height: 6px; }
.or { background: #dda061; }
.ye { background: #f5d477; }
.bl { background: #6a9fd8; }
.acts { display: flex; flex-direction: column; align-items: center; }
.acts button { height: 9px; font-size: 9px; line-height: 9px; }
.acts button:last-child { color: #f0808f; }
.card footer { display: flex; align-items: center; height: 18px; gap: 4px; padding: 0 7px 0 5px; }
.card footer button { width: 20px; height: 13px; }
.card footer .blue { color: #8298f0; }
.card footer .ico { width: 8px; height: 8px; stroke-width: 1; }
.card footer .framed { border: 1px solid #eee; color: #ccc; border-radius: 2px; }
.card footer .last { margin-left: auto; }

/* Message list */
.messages { position: absolute; left: 37px; top: 27px; width: 341px; height: 300px; overflow: hidden; border-radius: 6px; background: #fff; box-shadow: 0 3px 12px #0000004d; }
.messages h1 { height: 26px; padding-right: 5px; text-align: right; font: 500 13px/28px Inter, sans-serif; color: #8c8c8c; }
.sec { display: flex; align-items: center; gap: 2px; height: 19px; padding: 0 7px 0 6px; border-top: 1px solid #e4e4e4; background: #fcfcfc; font-size: 9px; font-weight: 400; color: #666; }
.msg + .sec { border-color: #cfcfd4; }
.sec span { flex: 1; }
.tickdot { width: 13px; height: 13px; fill: #a9a9a9; stroke: none; }
.tickdot path { fill: none; stroke: #fff; stroke-width: 2; }
.info { width: 12px; height: 12px; color: #5db4f1; }
.mute { width: 16px; height: 14px; }
.mute .fill { fill: #aaa; stroke: none; }
.mute .gap { stroke: #fff; stroke-width: 1; }
.mute .slash { stroke: #aaa; }
.msg { display: grid; grid-template-columns: 31px 1fr; column-gap: 6px; padding: 2px 9px 5px 8px; border-top: 1px solid #cfcfd4; font-size: 10px; line-height: 15px; font-weight: 400; color: #7c7c80; }
.msg p { padding-right: 8px; }
.unread { background: #efecfc; }
.face { width: 31px; height: 31px; margin-top: 12px; border-radius: 50%; background: #aaa4c9; color: #fff; font-size: 16px; font-weight: 500; line-height: 31px; text-align: center; }
.msg b { font-weight: 700; color: #3b3b40; }
.msg q { display: block; quotes: none; margin: 3px 0 4px 7px; font-style: italic; }
.msg footer { display: flex; align-items: center; gap: 5px; color: #707070; }
.msg em { font-style: normal; font-weight: 500; }
.msg time { font-weight: 500; }
.talk { width: 12px; height: 12px; color: #58b5fa; }
.mark { width: 8px; height: 8px; margin-left: auto; border-radius: 50%; background: #fb5c48; }
.mark.read { background: none; border: 2px solid #999; }

/* Trip card */
.trip { position: absolute; left: 37px; top: 386px; width: 341px; height: 171px; padding: 19px 18px 16px 19px; border: 1px solid #d6d9de; border-radius: 27px; background: #fff; box-shadow: 0 3px 8px #00000026; font: 500 11px/16px "Noto Sans", sans-serif; letter-spacing: 2px; color: #50648a; }
.trip h2 { font-size: 14px; line-height: 20px; font-weight: 500; }
.truck { padding: 1px 0 11px; border-bottom: 1px solid #e4e6ea; color: #a6aab2; }
.label { margin-top: 10px; }
.value { color: #45b764; font-weight: 600; }
.trip-foot { display: flex; justify-content: space-between; margin-top: 9px; }
.trip-foot p { padding-top: 3px; }
.trip button { width: 137px; height: 34px; border-radius: 17px; background: #0490ff; color: #fff; letter-spacing: 2px; }

/* Toast */
.toast { position: absolute; right: 36px; top: 26px; width: 252px; height: 54px; display: flex; align-items: center; gap: 18px; padding: 0 16px; border: 1px solid #d3d6dc; border-radius: 27px; background: #fff; box-shadow: 0 3px 7px #00000033; font-family: "Noto Sans", sans-serif; letter-spacing: 2px; }
.toast svg { width: 20px; height: 20px; fill: #0490ff; stroke: none; }
.toast circle { fill: #ef463e; }
.toast h2 { font-size: 12px; line-height: 15px; font-weight: 600; color: #50648a; white-space: nowrap; }
.toast p { font-size: 9px; line-height: 12px; color: #a6aab2; }
```
